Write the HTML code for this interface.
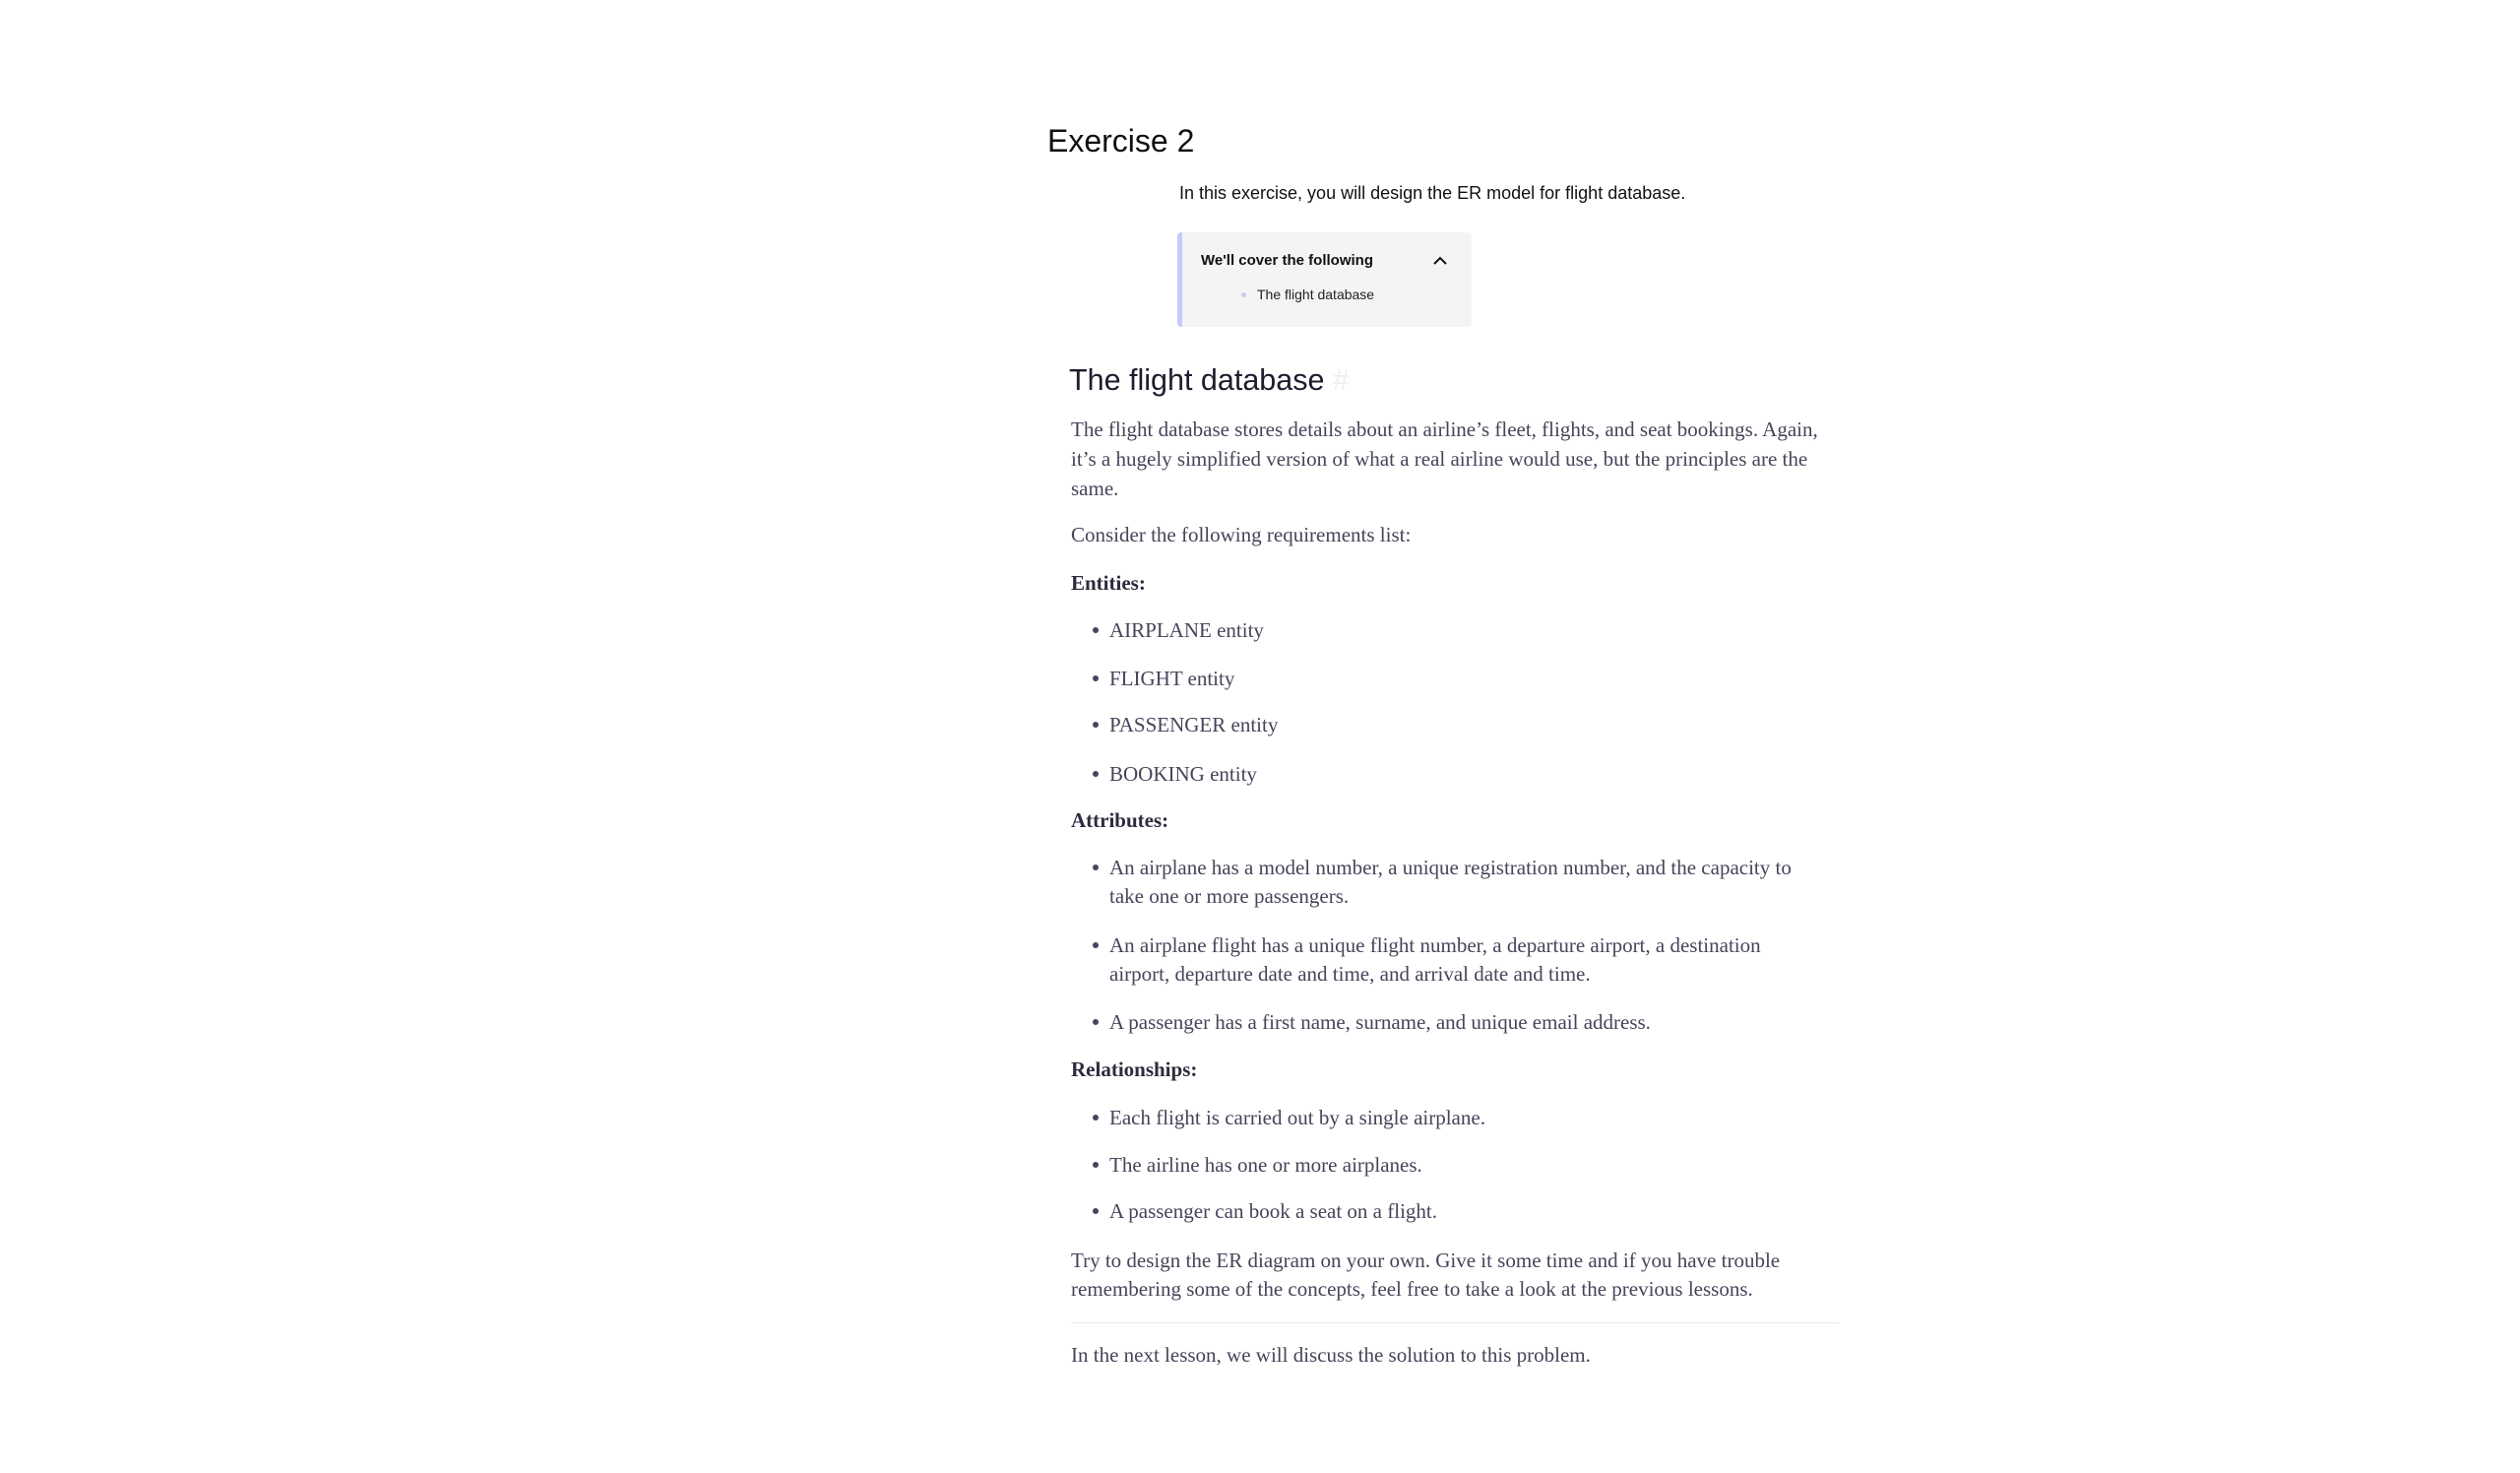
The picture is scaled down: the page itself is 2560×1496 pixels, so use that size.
<!DOCTYPE html>
<html><head><meta charset="utf-8"><style>
html,body{margin:0;padding:0;background:#fff;width:2560px;height:1496px;overflow:hidden}
.a{position:absolute;white-space:nowrap}
.s{font-family:"Liberation Sans",sans-serif}
.r{font-family:"Liberation Serif",serif;font-size:21px;color:#45455a;line-height:30px;height:30px}
.b{font-weight:bold;color:#2c2c3e}
.d{position:absolute;width:6px;height:6px;border-radius:50%;background:#45455a}
</style></head><body>
<div class="a s" style="left:1064px;top:121px;font-size:32px;color:#111;line-height:44px">Exercise 2</div>
<div class="a s" style="left:1198px;top:185px;font-size:18px;color:#111;line-height:22px">In this exercise, you will design the ER model for flight database.</div>
<div style="position:absolute;left:1196px;top:236px;width:299px;height:96px;background:#f4f4f5;border-left:5px solid #c8c9fb;border-radius:4px;box-sizing:border-box"></div>
<div class="a s" style="left:1220px;top:255px;font-size:15px;font-weight:bold;color:#111;line-height:20px">We'll cover the following</div>
<svg style="position:absolute;left:1455px;top:258px" width="16" height="14" viewBox="0 0 16 14"><path d="M2 10 L8 4 L14 10" fill="none" stroke="#111" stroke-width="2"/></svg>
<div style="position:absolute;left:1261px;top:297px;width:5px;height:5px;border-radius:50%;background:#c8c9fb"></div>
<div class="a s" style="left:1277px;top:290px;font-size:14px;color:#222;line-height:18px">The flight database</div>
<div class="a s" style="left:1086px;top:366px;font-size:30.5px;color:#1d1d2e;line-height:40px">The flight database <span style="color:#eeeef2">#</span></div>
<div class="a r" style="left:1088px;top:421px">The flight database stores details about an airline’s fleet, flights, and seat bookings. Again,</div>
<div class="a r" style="left:1088px;top:451px">it’s a hugely simplified version of what a real airline would use, but the principles are the</div>
<div class="a r" style="left:1088px;top:481px">same.</div>
<div class="a r" style="left:1088px;top:528px">Consider the following requirements list:</div>
<div class="a r b" style="left:1088px;top:577px">Entities:</div>
<div class="d" style="left:1110px;top:637px"></div><div class="a r" style="left:1127px;top:625px">AIRPLANE entity</div>
<div class="d" style="left:1110px;top:686px"></div><div class="a r" style="left:1127px;top:674px">FLIGHT entity</div>
<div class="d" style="left:1110px;top:733px"></div><div class="a r" style="left:1127px;top:721px">PASSENGER entity</div>
<div class="d" style="left:1110px;top:783px"></div><div class="a r" style="left:1127px;top:771px">BOOKING entity</div>
<div class="a r b" style="left:1088px;top:818px">Attributes:</div>
<div class="d" style="left:1110px;top:878px"></div><div class="a r" style="left:1127px;top:866px">An airplane has a model number, a unique registration number, and the capacity to</div>
<div class="a r" style="left:1127px;top:895px">take one or more passengers.</div>
<div class="d" style="left:1110px;top:957px"></div><div class="a r" style="left:1127px;top:945px">An airplane flight has a unique flight number, a departure airport, a destination</div>
<div class="a r" style="left:1127px;top:974px">airport, departure date and time, and arrival date and time.</div>
<div class="d" style="left:1110px;top:1035px"></div><div class="a r" style="left:1127px;top:1023px">A passenger has a first name, surname, and unique email address.</div>
<div class="a r b" style="left:1088px;top:1071px">Relationships:</div>
<div class="d" style="left:1110px;top:1132px"></div><div class="a r" style="left:1127px;top:1120px">Each flight is carried out by a single airplane.</div>
<div class="d" style="left:1110px;top:1180px"></div><div class="a r" style="left:1127px;top:1168px">The airline has one or more airplanes.</div>
<div class="d" style="left:1110px;top:1227px"></div><div class="a r" style="left:1127px;top:1215px">A passenger can book a seat on a flight.</div>
<div class="a r" style="left:1088px;top:1265px">Try to design the ER diagram on your own. Give it some time and if you have trouble</div>
<div class="a r" style="left:1088px;top:1294px">remembering some of the concepts, feel free to take a look at the previous lessons.</div>
<div style="position:absolute;left:1088px;top:1343px;width:781px;height:1px;background:#e8e8ec"></div>
<div class="a r" style="left:1088px;top:1361px">In the next lesson, we will discuss the solution to this problem.</div>
</body></html>
